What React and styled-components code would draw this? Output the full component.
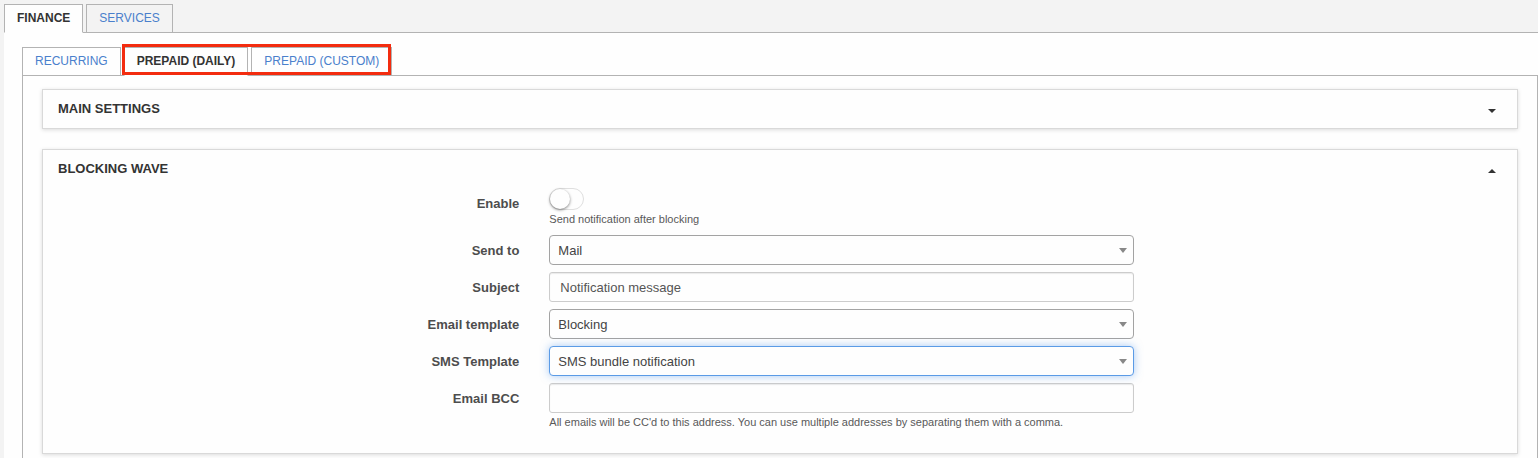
import React, { useState } from "react";
import styled, { createGlobalStyle, css } from "styled-components";

const GlobalStyle = createGlobalStyle`
  *, *::before, *::after { box-sizing: border-box; }
  body {
    margin: 0;
    background: #f3f3f3;
    color: #333;
    font-family: "Liberation Sans", Arial, sans-serif;
    font-size: 13px;
    line-height: 20px;
  }
  button, input, select { font: inherit; margin: 0; }
`;

const Page = styled.div`
  display: flex;
  flex-direction: column;
  min-height: 100vh;
  padding: 4px 0 0 4px;
`;

const TabBar = styled.div`
  display: flex;
  gap: 3px;
  border-bottom: 1px solid #b3b3b3;
`;

const Tab = styled.button`
  height: 29px;
  margin-bottom: -1px;
  padding: 0 12px 2px;
  border: 1px solid #b3b3b3;
  background: ${(p) => p.$idle};
  color: #4a80cc;
  font-size: 12px;
  line-height: 24px;
  white-space: nowrap;
  cursor: pointer;

  ${(p) =>
    p.$active &&
    css`
      background: #fefefe;
      border-bottom-color: #fefefe;
      color: #333;
      font-weight: bold;
    `}
`;

const TabGroup = styled.div`
  position: relative;
  display: flex;
  gap: 3px;
`;

const Marker = styled.div`
  position: absolute;
  top: -3px;
  right: 1px;
  bottom: 0;
  left: -2px;
  border: 3px solid #f32c0f;
  pointer-events: none;
`;

const Content = styled.main`
  flex: 1;
  display: flex;
  flex-direction: column;
  padding: 14px 0 0 18px;
  background: #fefefe;
`;

const TabPanel = styled.div`
  flex: 1;
  display: flex;
  flex-direction: column;
  gap: 20px;
  padding: 13px 19px 4px;
  border: solid #b3b3b3;
  border-width: 0 1px;
`;

const Card = styled.section`
  border: 1px solid #d9d9d9;
  background: #fefefe;
  box-shadow: 0 1px 4px rgba(0, 0, 0, 0.14);
`;

const CardHeader = styled.button`
  display: flex;
  align-items: center;
  justify-content: space-between;
  width: 100%;
  height: 38px;
  padding: 0 21px 0 15px;
  border: 0;
  background: none;
  color: #333;
  font-weight: bold;
  cursor: pointer;
`;

const Caret = styled.span`
  margin-top: 4px;
  border: solid transparent;
  border-width: ${(p) => (p.$up ? "0 4px 4px" : "4px 4px 0")};
  border-${(p) => (p.$up ? "bottom" : "top")}-color: #333;
`;

const Form = styled.form`
  display: flex;
  flex-direction: column;
  gap: 7px;
  padding-bottom: 22px;
`;

const Row = styled.div`
  display: grid;
  grid-template-columns: 4fr 5fr 3fr;
`;

const Label = styled.label`
  padding: 6px 15px 0 0;
  color: #4d4d4d;
  font-weight: bold;
  text-align: right;
`;

const Field = styled.div`
  display: flex;
  flex-direction: column;
  padding: 0 15px;
`;

const Help = styled.span`
  color: #595959;
  font-size: 11px;
  line-height: 18px;
`;

const Toggle = styled.input`
  appearance: none;
  width: 35px;
  height: 22px;
  border: 1px solid #dfdfdf;
  border-radius: 11px;
  background: ${(p) => (p.checked ? "#5b9be6" : "#fefefe")};
  cursor: pointer;

  &::before {
    content: "";
    display: block;
    width: 20px;
    height: 20px;
    margin-left: ${(p) => (p.checked ? "13px" : "0")};
    border-radius: 50%;
    background: #fefefe;
    box-shadow: 0 1px 3px rgba(0, 0, 0, 0.5);
  }
`;

const TextInput = styled.input`
  width: 100%;
  height: 30px;
  padding: 0 10px;
  border: 1px solid #ccc;
  border-radius: 3px;
  outline: 0;
  background: #fefefe;
  box-shadow: inset 0 1px 1px rgba(0, 0, 0, 0.08);
  color: #555;
`;

const SelectWrap = styled.div`
  position: relative;

  &::after {
    content: "";
    position: absolute;
    top: 13px;
    right: 7px;
    border: solid transparent;
    border-width: 5px 4px 0;
    border-top-color: #888;
    pointer-events: none;
  }
`;

const Select = styled.select`
  appearance: none;
  display: block;
  width: 100%;
  height: 30px;
  padding: 2px 20px 0 8px;
  border: 1px solid ${(p) => (p.$focused ? "#5b9be6" : "#a3a3a3")};
  border-radius: 4px;
  outline: 0;
  background: #fefefe;
  box-shadow: ${(p) => (p.$focused ? "0 0 8px rgba(82, 150, 236, 0.5)" : "none")};
  color: #444;
`;

function SelectRow({ id, label, options, focused }) {
  return (
    <Row>
      <Label htmlFor={id}>{label}</Label>
      <Field>
        <SelectWrap>
          <Select id={id} $focused={focused}>
            {options.map((o) => (
              <option key={o}>{o}</option>
            ))}
          </Select>
        </SelectWrap>
      </Field>
    </Row>
  );
}

export default function App() {
  const [section, setSection] = useState("finance");
  const [plan, setPlan] = useState("daily");
  const [mainOpen, setMainOpen] = useState(false);
  const [waveOpen, setWaveOpen] = useState(true);
  const [enabled, setEnabled] = useState(false);

  const tab = (value, current, select, idle, text) => (
    <Tab
      type="button"
      role="tab"
      aria-selected={value === current}
      $active={value === current}
      $idle={idle}
      onClick={() => select(value)}
    >
      {text}
    </Tab>
  );

  return (
    <>
      <GlobalStyle />
      <Page>
        <TabBar role="tablist">
          {tab("finance", section, setSection, "#f3f3f3", "FINANCE")}
          {tab("services", section, setSection, "#f3f3f3", "SERVICES")}
        </TabBar>
        <Content>
          <TabBar role="tablist">
            {tab("recurring", plan, setPlan, "#fefefe", "RECURRING")}
            <TabGroup>
              {tab("daily", plan, setPlan, "#fefefe", "PREPAID (DAILY)")}
              {tab("custom", plan, setPlan, "#fefefe", "PREPAID (CUSTOM)")}
              <Marker />
            </TabGroup>
          </TabBar>
          <TabPanel>
            <Card>
              <CardHeader
                type="button"
                aria-expanded={mainOpen}
                onClick={() => setMainOpen(!mainOpen)}
              >
                MAIN SETTINGS
                <Caret $up={mainOpen} />
              </CardHeader>
            </Card>
            <Card>
              <CardHeader
                type="button"
                aria-expanded={waveOpen}
                onClick={() => setWaveOpen(!waveOpen)}
              >
                BLOCKING WAVE
                <Caret $up={waveOpen} />
              </CardHeader>
              {waveOpen && (
                <Form>
                  <Row>
                    <Label htmlFor="enable">Enable</Label>
                    <Field>
                      <Toggle
                        id="enable"
                        type="checkbox"
                        checked={enabled}
                        onChange={(e) => setEnabled(e.target.checked)}
                      />
                      <Help>Send notification after blocking</Help>
                    </Field>
                  </Row>
                  <SelectRow id="send-to" label="Send to" options={["Mail"]} />
                  <Row>
                    <Label htmlFor="subject">Subject</Label>
                    <Field>
                      <TextInput id="subject" type="text" defaultValue="Notification message" />
                    </Field>
                  </Row>
                  <SelectRow id="email-template" label="Email template" options={["Blocking"]} />
                  <SelectRow
                    id="sms-template"
                    label="SMS Template"
                    options={["SMS bundle notification"]}
                    focused
                  />
                  <Row>
                    <Label htmlFor="email-bcc">Email BCC</Label>
                    <Field>
                      <TextInput id="email-bcc" type="text" />
                      <Help>
                        All emails will be CC'd to this address. You can use multiple addresses by
                        separating them with a comma.
                      </Help>
                    </Field>
                  </Row>
                </Form>
              )}
            </Card>
          </TabPanel>
        </Content>
      </Page>
    </>
  );
}
